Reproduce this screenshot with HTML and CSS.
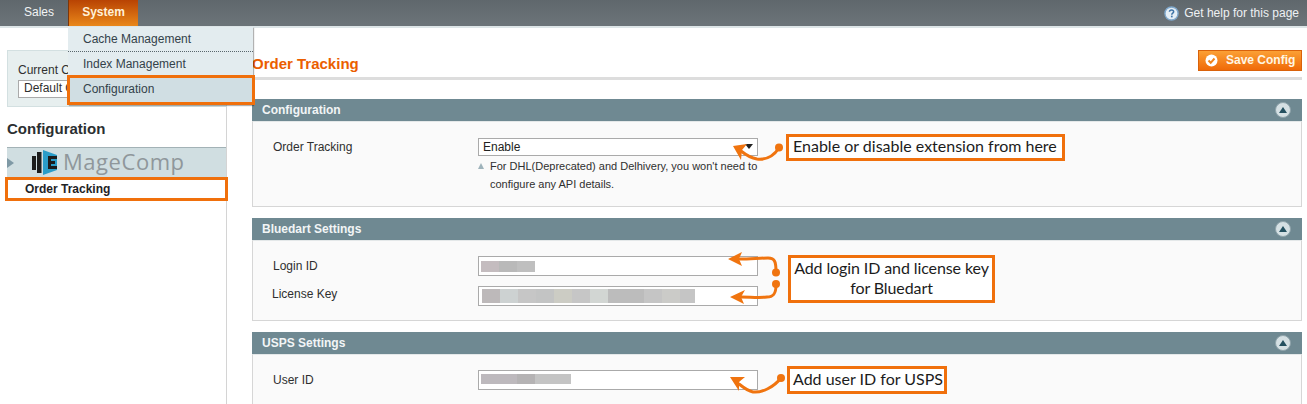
FILE: index.html
```html
<!DOCTYPE html>
<html lang="en">
<head>
<meta charset="utf-8">
<title>Order Tracking Configuration</title>
<link rel="stylesheet" href="styles.css">
</head>
<body>
<header class="nav">
  <ul class="nav-list">
    <li class="nav-item">Sales</li>
    <li class="nav-item nav-item-active">System</li>
  </ul>
  <a class="help">
    <svg class="help-icon" width="15" height="15" viewBox="0 0 16 16"><circle cx="8" cy="8" r="7" fill="#e4eef6" stroke="#7fa8cc" stroke-width="1.5"/><path d="M5.800 6.200C5.900 4.800 6.900 4.200 8.100 4.200C9.400 4.200 10.300 5 10.300 6.100C10.300 7.500 8.300 7.700 8.300 9.200" fill="none" stroke="#3f74a6" stroke-width="1.600"/><rect x="7.400" y="10.300" width="1.800" height="1.800" fill="#3f74a6"/></svg>
    <span>Get help for this page</span>
  </a>
  <ul class="menu">
    <li class="menu-item menu-item-dotted">Cache Management</li>
    <li class="menu-item">Index Management</li>
    <li class="menu-item menu-item-current">Configuration</li>
  </ul>
</header>

<div class="layout">
  <aside class="sidebar">
    <div class="scope">
      <label class="scope-label">Current C</label>
      <div class="scope-select">Default C</div>
    </div>
    <div class="side-panel">
      <h3 class="side-title">Configuration</h3>
      <div class="tab-head">
        <span class="tab-arrow"></span>
        <svg class="logo" width="25" height="25" viewBox="0 0 25 25">
          <rect x="0" y="6" width="4" height="14" fill="#1c1c1c"/>
          <rect x="5" y="2" width="4.500" height="21" fill="#1c1c1c"/>
          <path d="M11 0L25 5V20L11 25Z" fill="#2a9cc8"/>
          <path d="M16 6H25V9H19V11H23V14H19V16H25V19H16Z" fill="#1c1c1c"/>
        </svg>
        <span class="logo-text">MageComp</span>
      </div>
      <div class="tab-link">Order Tracking</div>
    </div>
  </aside>

  <main class="content">
    <div class="page-head">
      <h3 class="page-title">Order Tracking</h3>
      <button class="save">
        <svg width="13" height="13" viewBox="0 0 13 13"><circle cx="6.500" cy="6.500" r="6" fill="#fff"/><path d="M3.500 6.500L5.700 8.800L9.500 4.500" fill="none" stroke="#f0841c" stroke-width="2"/></svg>
        <span>Save Config</span>
      </button>
    </div>

    <section class="section">
      <div class="section-head"><span>Configuration</span><span class="collapse"></span></div>
      <div class="section-body body-general">
        <div class="row">
          <label class="row-label row-label-select">Order Tracking</label>
          <div class="row-value">
            <div class="select">Enable</div>
            <p class="note">For DHL(Deprecated) and Delhivery, you won't need to<br>configure any API details.</p>
          </div>
        </div>
      </div>
    </section>

    <section class="section">
      <div class="section-head"><span>Bluedart Settings</span><span class="collapse"></span></div>
      <div class="section-body body-bluedart">
        <div class="row">
          <label class="row-label">Login ID</label>
          <div class="row-value"><div class="input"><span class="mask mask-login"></span></div></div>
        </div>
        <div class="row">
          <label class="row-label row-label-shift">License Key</label>
          <div class="row-value"><div class="input"><span class="mask mask-license"></span></div></div>
        </div>
      </div>
    </section>

    <section class="section section-last">
      <div class="section-head"><span>USPS Settings</span><span class="collapse"></span></div>
      <div class="section-body body-usps">
        <div class="row">
          <label class="row-label">User ID</label>
          <div class="row-value"><div class="input"><span class="mask mask-user"></span></div></div>
        </div>
      </div>
    </section>
  </main>
</div>

<svg class="arrows" width="1307" height="404" viewBox="0 0 1307 404">
  <g fill="none" stroke="#f0740f" stroke-width="3" stroke-linecap="round">
    <path d="M779 148C773 157 765 160 757 159C751 158 746 155 741 151"/>
    <path d="M776 272C776 262 775 258 768 258C760 258 750 259 740 259"/>
    <path d="M776 285C776 293 774 297 767 297C760 298 750 297 741 297"/>
    <path d="M781 378C774 387 762 393 753 392C748 391 744 388 739 384"/>
  </g>
  <g fill="#f0740f">
    <circle cx="779" cy="147.500" r="4"/>
    <circle cx="776" cy="272.500" r="4"/>
    <circle cx="776" cy="284" r="4"/>
    <circle cx="781" cy="378" r="4"/>
    <path d="M733 146L747 144L742 150L741 160Z"/>
    <path d="M728 259L742 252L739 259L742 266Z"/>
    <path d="M730 297L745 290L741 297L744 304Z"/>
    <path d="M730 377L745 377L739 382L739 391Z"/>
  </g>
</svg>
<div class="note-box note-enable">Enable or disable extension from here</div>
<div class="note-box note-login">Add login ID and license key<br>for Bluedart</div>
<div class="note-box note-user">Add user ID for USPS</div>
<div class="outline outline-menu"></div>
</body>
</html>
```
FILE: styles.css
```css
* { box-sizing: border-box; }
html, body { margin: 0; height: 404px; overflow: hidden; }
body {
  position: relative;
  background: #fff;
  font: 12px/15px "Liberation Sans", Arial, sans-serif;
  color: #2f2f2f;
}
ul { list-style: none; margin: 0; padding: 0; }
h3, p { margin: 0; }

/* top navigation */
.nav {
  position: relative;
  z-index: 2;
  display: flex;
  justify-content: space-between;
  height: 28px;
  background: linear-gradient(#5f676c, #6b7378 90%);
  border-bottom: 2px solid #dde5e7;
  color: #fff;
}
.nav-list { display: flex; padding-left: 10px; }
.nav-item { width: 58px; height: 26px; padding-top: 5px; text-align: center; color: #f2f4f5; }
.nav-item-active {
  width: 70px;
  font-weight: bold;
  background: linear-gradient(#b84303, #e9871a);
  border-left: 1px solid #7d3608;
  color: #fff1d8;
}
.help { display: flex; align-items: center; gap: 5px; height: 26px; padding-right: 8px; color: #eef1f3; }
.menu {
  position: absolute;
  left: 68px;
  top: 27px;
  width: 185px;
  background: #e3ecef;
  box-shadow: 1px 1px 1px rgba(0,0,0,.3);
  color: #33424a;
}
.menu-item { height: 25px; padding: 5px 0 0 15px; }
.menu-item-dotted { border-bottom: 1px dotted #59666c; }
.menu-item-current { height: 28px; background: #d0dee3; }

/* page layout */
.layout { display: flex; padding: 22px 5px 0 7px; }
.sidebar { width: 220px; flex: none; }
.scope {
  height: 57px;
  padding: 12px 0 0 10px;
  background: #e7efef;
  border: 1px solid #d3e0e1;
  white-space: nowrap;
}
.scope-label { display: block; height: 17px; }
.scope-select { width: 190px; height: 18px; padding-left: 5px; background: #fff; border: 1px solid #aaa; }
.side-panel { height: 297px; border-right: 1px solid #d4d4d4; }
.side-title { padding-top: 13px; height: 40px; font-size: 15px; line-height: 18px; color: #2b2f31; }
.tab-head {
  display: flex;
  align-items: center;
  height: 30px;
  background: #d0dee1;
  border-top: 1px solid #a3b2b6;
}
.tab-arrow { width: 0; height: 0; border: 5px solid transparent; border-left: 7px solid #7f99a5; border-right: 0; }
.logo { margin-left: 18px; }
.logo-text { margin: 0 0 3px 6px; font: 400 22px/28px "Open Sans", sans-serif; color: #8f979b; letter-spacing: .55px; }
.tab-link {
  position: relative;
  width: 223px;
  height: 24px;
  margin-left: -2px;
  padding: 2px 0 0 17px;
  background: #fff;
  border: 3px solid #f0700c;
  font-weight: bold;
  color: #1f2326;
}

/* main column */
.content { flex: 1; margin-left: 25px; min-width: 0; }
.page-head {
  display: flex;
  justify-content: space-between;
  height: 30px;
  margin-bottom: 19px;
  border-bottom: 3px solid #dddddd;
}
.page-title { padding-top: 4px; font-size: 15px; line-height: 20px; color: #eb5e00; }
.save {
  display: flex;
  align-items: center;
  gap: 8px;
  width: 104px;
  height: 21px;
  padding: 0 0 0 6px;
  background: linear-gradient(#fba035, #f06a08);
  border: 1px solid #d9620a;
  color: #fff6e4;
  font: bold 12px/15px "Liberation Sans", Arial, sans-serif;
}
.section { margin-bottom: 11px; }
.section-last { margin-bottom: 0; }
.section-head {
  display: flex;
  justify-content: space-between;
  align-items: center;
  height: 22px;
  padding: 0 11px 0 10px;
  background: #6f8992;
  color: #f2f5f6;
  font-weight: bold;
}
.collapse {
  position: relative;
  width: 16px;
  height: 16px;
  border-radius: 50%;
  background: #d5e0e3;
  border: 1px solid #8fa4ab;
}
.collapse::after {
  content: "";
  position: absolute;
  left: 3px;
  top: 4px;
  border: 4px solid transparent;
  border-top: 0;
  border-bottom: 6px solid #24505f;
}
.section-body { display: flex; flex-direction: column; gap: 10px; background: #fafafa; border: 1px solid #d6d6d6; border-top-color: #e4e8e9; }
.body-general { height: 86px; padding-top: 16px; }
.body-bluedart { height: 81px; padding-top: 15px; }
.body-usps { height: 50px; padding-top: 15px; border-bottom: 0; }
.row { display: flex; }
.row-label { width: 225px; padding: 3px 0 0 20px; }
.row-label-select { padding-top: 2px; }
.row-label-shift { padding: 1px 0 0 19px; }
.row-value { width: 280px; }
.select {
  position: relative;
  height: 18px;
  padding-left: 4px;
  background: #fff;
  border: 1px solid #aaa;
  color: #222;
  line-height: 16px;
}
.select::after {
  content: "";
  position: absolute;
  right: 4px;
  top: 5px;
  border: 4px solid transparent;
  border-bottom: 0;
  border-top: 5px solid #222;
}
.note { position: relative; padding: 1px 0 0 12px; font-size: 11px; line-height: 18px; white-space: nowrap; }
.note::before {
  content: "";
  position: absolute;
  left: 0;
  top: 7px;
  border: 3.500px solid transparent;
  border-top: 0;
  border-bottom: 6px solid #9eb3bb;
}
.input { position: relative; height: 20px; background: #fff; border: 1px solid #aaa; }
.mask { position: absolute; left: 2px; display: block; }
.mask-login { top: 4px; width: 54px; height: 11px; background: linear-gradient(90deg, #c4bcbf 0 18px, #b9b9b9 18px 36px, #bfbfbf 36px); }
.mask-license {
  top: 2px;
  left: 3px;
  width: 213px;
  height: 14px;
  background: linear-gradient(90deg, #bdb9ba 0 18px, #cdd2d2 18px 36px, #c6c6c6 36px 54px, #c3c4c4 54px 72px, #ccccc4 72px 90px, #c6c6c6 90px 108px, #d2d6d3 108px 126px, #bcbcbc 126px 162px, #c5c5c5 162px 180px, #cbcbc8 180px 198px, #c5c5c5 198px);
}
.mask-user { top: 3px; width: 90px; height: 10px; background: linear-gradient(90deg, #bdb9bd 0 36px, #b5b3b4 36px 54px, #c4c4c4 54px); }

/* annotations laid over the screenshot */
.arrows { position: absolute; left: 0; top: 0; z-index: 3; pointer-events: none; }
.note-box {
  position: absolute;
  z-index: 3;
  background: #fff;
  border: 3px solid #f0700c;
  font: 16px/20px "Lato", sans-serif;
  color: #1c1c1c;
  white-space: nowrap;
}
.note-enable { left: 786px; top: 134px; width: 279px; height: 27px; padding: 0 0 0 4px; line-height: 18px; }
.note-login { left: 788px; top: 255px; width: 207px; height: 48px; text-align: center; letter-spacing: -.1px; }
.note-user { left: 787px; top: 366px; width: 160px; height: 28px; padding: 0 0 0 3px; }
.outline { position: absolute; z-index: 3; border: 3px solid #f0700c; }
.outline-menu { left: 67px; top: 75px; width: 188px; height: 30px; }
```
